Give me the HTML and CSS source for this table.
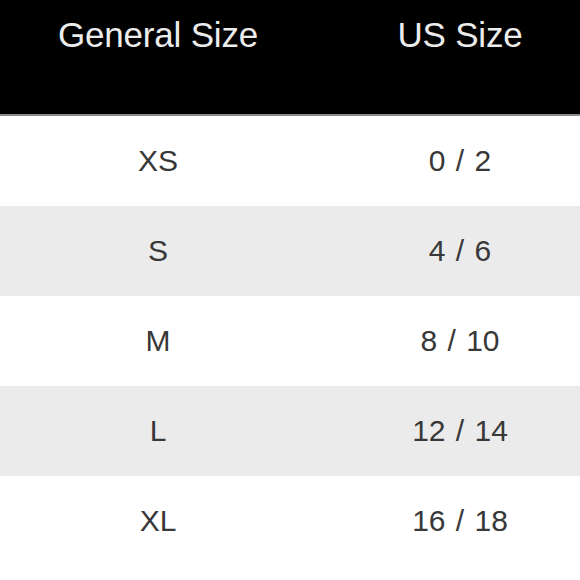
FILE: index.html
```html
<!DOCTYPE html>
<html>
<head>
<meta charset="utf-8">
<link rel="stylesheet" href="styles.css">
</head>
<body>
<div class="table">
  <div class="row head">
    <div class="cell">General Size</div>
    <div class="cell">US Size</div>
  </div>
  <div class="row">
    <div class="cell">XS</div>
    <div class="cell">0 / 2</div>
  </div>
  <div class="row alt">
    <div class="cell">S</div>
    <div class="cell">4 / 6</div>
  </div>
  <div class="row">
    <div class="cell">M</div>
    <div class="cell">8 / 10</div>
  </div>
  <div class="row alt">
    <div class="cell">L</div>
    <div class="cell">12 / 14</div>
  </div>
  <div class="row">
    <div class="cell">XL</div>
    <div class="cell">16 / 18</div>
  </div>
</div>
</body>
</html>
```
FILE: styles.css
```css
html, body {
  margin: 0;
  padding: 0;
  overflow: hidden;
  background: #ffffff;
}
.table {
  width: 580px;
  overflow: hidden;
  font-family: "Liberation Sans", Arial, sans-serif;
}
.row {
  display: grid;
  grid-template-columns: 302px 302px;
  padding-left: 7px;
  height: 90px;
  align-items: center;
  font-size: 30px;
  word-spacing: 2px;
  color: #383838;
  background: #ffffff;
}
.row.alt {
  background: #ebebeb;
}
.row.head {
  height: 114px;
  align-items: start;
  background: #000000;
  color: #ececec;
  font-size: 35px;
  line-height: 40px;
  letter-spacing: -0.2px;
  word-spacing: 0;
  border-bottom: 2px solid #8a8a8a;
}
.head .cell {
  padding-top: 15px;
}
.cell {
  text-align: center;
  white-space: nowrap;
}
```
